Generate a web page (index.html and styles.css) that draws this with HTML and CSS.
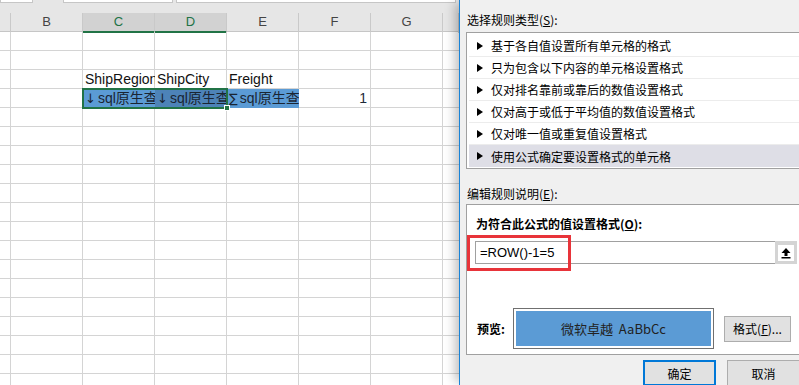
FILE: index.html
```html
<!DOCTYPE html>
<html lang="zh-CN">
<head>
    <meta charset="UTF-8">
    <meta name="viewport" content="width=device-width, initial-scale=1.0">
    <title>新建格式规则</title>
    <link rel="stylesheet" href="styles.css">
</head>
<body>
    <div class="sheet">
        <div class="sheet-top">
            <span class="bar-box name-box"></span>
            <span class="bar-box fx-box"></span>
            <span class="bar-box formula-box"></span>
        </div>

        <div class="col-head">
            <div class="hd"></div>
            <div class="hd">B</div>
            <div class="hd active">C</div>
            <div class="hd active">D</div>
            <div class="hd">E</div>
            <div class="hd">F</div>
            <div class="hd">G</div>
            <div class="hd"></div>
        </div>

        <div class="cells">
            <div class="row"></div>
            <div class="row"></div>
            <div class="row">
                <div class="cell"></div>
                <div class="cell"></div>
                <div class="cell">ShipRegion</div>
                <div class="cell">ShipCity</div>
                <div class="cell">Freight</div>
            </div>
            <div class="row row-data">
                <div class="cell"></div>
                <div class="cell"></div>
                <div class="cell fill"><span class="mark">↓</span>sql原生查</div>
                <div class="cell fill shaded"><span class="mark">↓</span>sql原生查</div>
                <div class="cell fill"><span class="mark">∑</span>sql原生查</div>
                <div class="cell num">1</div>
                <div class="selection"><span class="handle"></span></div>
            </div>
        </div>
    </div>

    <div class="dialog">
        <div class="dlg-label">选择规则类型(<u>S</u>):</div>
        <ul class="rule-list">
            <li>基于各自值设置所有单元格的格式</li>
            <li>只为包含以下内容的单元格设置格式</li>
            <li>仅对排名靠前或靠后的数值设置格式</li>
            <li>仅对高于或低于平均值的数值设置格式</li>
            <li>仅对唯一值或重复值设置格式</li>
            <li class="selected">使用公式确定要设置格式的单元格</li>
        </ul>

        <div class="dlg-label edit-label">编辑规则说明(<u>E</u>):</div>
        <div class="edit-box">
            <div class="formula-label">为符合此公式的值设置格式(<u>O</u>):</div>
            <div class="formula-row">
                <div class="formula-input">=ROW()-1=5</div>
                <div class="ref-btn">
                    <span class="ref-icon">
                        <svg width="12" height="12" viewBox="0 0 12 12">
                            <path d="M6 1 L10.5 6 H7.5 V9 H4.5 V6 H1.5 Z" fill="#000"/>
                            <rect x="1.5" y="10" width="9" height="1.5" fill="#000"/>
                        </svg>
                    </span>
                </div>
                <div class="highlight"></div>
            </div>
            <div class="preview-row">
                <span class="preview-label">预览:</span>
                <div class="preview-frame">
                    <div class="preview-sample">微软卓越&nbsp; AaBbCc</div>
                </div>
                <button class="btn">格式(<u>F</u>)...</button>
            </div>
        </div>

        <div class="dlg-buttons">
            <button class="btn btn-default">确定</button>
            <button class="btn">取消</button>
        </div>
    </div>
</body>
</html>
```

FILE: styles.css
```css
* {
    margin: 0;
    padding: 0;
    box-sizing: border-box;
}

body {
    display: flex;
    width: 799px;
    height: 385px;
    overflow: hidden;
    background: #fff;
    font-family: "Liberation Sans", "Noto Sans CJK SC", sans-serif;
}

/* 表格区域 */
.sheet {
    flex: 0 0 459px;
    display: flex;
    flex-direction: column;
    background: #fff;
}

.sheet-top {
    height: 13px;
    background: #e6e6e6;
    display: flex;
    align-items: flex-start;
}

.bar-box {
    height: 3px;
    background: #fff;
    border: 1px solid #c6c6c6;
    border-top: none;
}

.name-box { width: 33px; }
.fx-box { width: 110px; margin-left: 30px; }
.formula-box { width: 280px; margin-left: 3px; }

.col-head {
    height: 19px;
    display: grid;
    grid-template-columns: 11px repeat(6, 72px) 1fr;
    background: #e6e6e6;
    border-bottom: 1px solid #c6c6c6;
}

.hd {
    border-right: 1px solid #c9c9c9;
    text-align: center;
    font-size: 13px;
    line-height: 18px;
    color: #444;
}

.hd.active {
    background: #d2d2d2;
    color: #217346;
    border-bottom: 2px solid #217346;
}

.cells {
    flex: 1;
    background:
        linear-gradient(to right, transparent 71px, #d4d4d4 71px) 11px 0 / 72px 100% repeat-x,
        linear-gradient(to bottom, transparent 18px, #d4d4d4 18px) 0 0 / 100% 19px repeat-y;
}

.row {
    height: 19px;
    display: grid;
    grid-template-columns: 11px repeat(6, 72px) 1fr;
}

.cell {
    overflow: hidden;
    white-space: nowrap;
    font-size: 14px;
    line-height: 18px;
    padding-left: 2px;
    color: #111;
}

.cell .mark {
    font-family: "DejaVu Sans", sans-serif;
    font-size: 13px;
    margin-right: 2px;
}

.row-data {
    position: relative;
}

.cell.fill {
    background: #5b9bd5;
    height: 19px;
    color: #1a2533;
}

.cell.shaded {
    background: #4d83b8;
}

.cell.num {
    text-align: right;
    padding-right: 4px;
    color: #1e2a3a;
}

.selection {
    position: absolute;
    left: 82px;
    top: -1px;
    width: 146px;
    height: 21px;
    border: 2px solid #217346;
}

.handle {
    position: absolute;
    right: -4px;
    bottom: -4px;
    width: 6px;
    height: 6px;
    background: #217346;
    border: 1px solid #fff;
}

/* 对话框 */
.dialog {
    flex: 0 0 347px;
    position: relative;
    z-index: 1;
    background: #f0f0f0;
    border-left: 1px solid #1883d7;
    padding: 11px 0 0 6px;
    box-shadow: -7px 0 10px -3px rgba(0,0,0,0.25);
    font-family: "Noto Sans CJK SC", sans-serif;
    font-size: 12px;
    color: #000;
}

.dlg-label {
    line-height: 18px;
    padding-left: 1px;
    margin-bottom: 3px;
}

.rule-list {
    list-style: none;
    background: #fff;
    border: 1px solid #a0a0a0;
    padding: 2px 0 1px;
}

.rule-list li {
    display: flex;
    align-items: center;
    gap: 8px;
    height: 22px;
    margin-left: 2px;
    padding-left: 8px;
    border-bottom: 1px solid #ececec;
    line-height: 21px;
}

.rule-list li::before {
    content: "";
    border-left: 6px solid #000;
    border-top: 4.5px solid transparent;
    border-bottom: 4.5px solid transparent;
}

.rule-list li.selected {
    background: #dedee6;
    border-bottom: none;
}

.edit-label {
    margin-top: 16px;
    margin-bottom: 1px;
}

.edit-box {
    background: #fff;
    border: 1px solid #a0a0a0;
    padding: 10px 8px 5px 8px;
}

.formula-label {
    font-weight: bold;
    line-height: 18px;
    padding-left: 1px;
}

.formula-row {
    position: relative;
    display: flex;
    height: 23px;
    margin-top: 8px;
    border: 1px solid #a0a0a0;
}

.formula-input {
    flex: 1;
    padding-left: 4px;
    font-family: "Liberation Sans", sans-serif;
    font-size: 13px;
    line-height: 21px;
}

.ref-btn {
    width: 22px;
    margin: -1px -1px -1px 0;
    background: #d4d4d4;
    display: flex;
    align-items: center;
    justify-content: center;
}

.ref-icon {
    width: 16px;
    height: 16px;
    background: #fff;
    display: flex;
    align-items: center;
    justify-content: center;
}

.highlight {
    position: absolute;
    left: -9px;
    top: -7px;
    width: 104px;
    height: 36px;
    border: 3px solid #e8343a;
}

.preview-row {
    display: flex;
    align-items: center;
    margin-top: 44px;
}

.preview-label {
    width: 38px;
    padding-left: 2px;
    font-weight: bold;
}

.preview-frame {
    width: 201px;
    height: 41px;
    border: 1px solid #707070;
    padding: 2px;
    background: #fff;
}

.preview-sample {
    height: 100%;
    background: #5b9bd5;
    color: #222;
    font-size: 13px;
    line-height: 35px;
    text-align: center;
}

.btn {
    height: 26px;
    background: #e1e1e1;
    border: 1px solid #adadad;
    font-family: "Noto Sans CJK SC", sans-serif;
    font-size: 12px;
    color: #000;
}

.preview-row .btn {
    width: 67px;
    margin-left: 10px;
}

.dlg-buttons {
    display: flex;
    justify-content: flex-end;
    gap: 11px;
    margin-top: 5px;
    padding-right: 6px;
}

.dlg-buttons .btn {
    width: 73px;
}

.btn-default {
    border: 2px solid #0078d7;
}
```
